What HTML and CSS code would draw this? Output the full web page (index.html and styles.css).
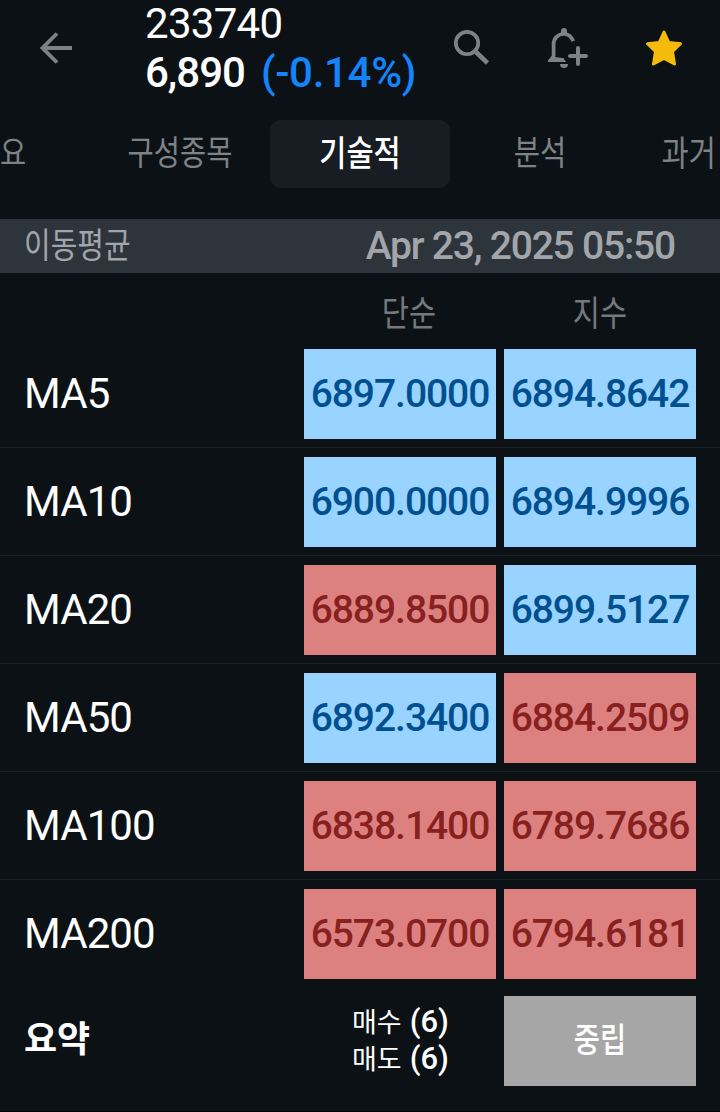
FILE: index.html
```html
<!DOCTYPE html>
<html lang="ko">
<head>
<meta charset="utf-8">
<title>233740</title>
<link rel="stylesheet" href="styles.css">
</head>
<body>
<div class="screen">
  <header class="header">
    <svg class="back" width="36" height="36" viewBox="0 0 36 36"><path d="M34 18H5M19 3.500L4.500 18L19 32.500" fill="none" stroke="#7e8185" stroke-width="3.8"/></svg>
    <div class="quote">
      <div class="symbol">233740</div>
      <div class="price"><span class="last">6,890</span><span class="change">(-0.14%)</span></div>
    </div>
    <div class="actions">
      <svg width="40" height="40" viewBox="0 0 40 40" fill="none" stroke="#7e8185"><circle cx="16" cy="16" r="11.2" stroke-width="3.8"/><path d="M25 25L36.500 36" stroke-width="4.600"/></svg>
      <svg class="bell" width="44" height="44" viewBox="0 0 44 44"><path d="M28.300 15.200C26.500 10.500 23.500 8 19 8C13 8 8.600 12.500 8.600 18V30L6 34H19" fill="none" stroke="#7e8185" stroke-width="3.7"/><path d="M16 7.500V5a3 3 0 0 1 6 0V7.500zM3 36V34.500L7 30.500L18.500 32.300L21 36zM15 38h8a4 4 0 0 1-8 0z" fill="#7e8185"/><path d="M33 22V38M25 30H41" stroke="#7e8185" stroke-width="4" stroke-linecap="round"/></svg>
      <svg width="40" height="40" viewBox="0 0 40 40"><path d="M21 5L25.800 15.500L37.500 16.700L29.500 24.500L31.500 37L21 31.500L10.500 37L12.500 24.500L4.500 16.700L16.200 15.500Z" fill="#f4bb0b" stroke="#f4bb0b" stroke-width="3" stroke-linejoin="round"/></svg>
    </div>
  </header>
  <nav class="tabs">
    <div class="tab"><span class="ko">개요</span></div>
    <div class="tab"><span class="ko">구성종목</span></div>
    <div class="tab active"><span class="ko">기술적</span></div>
    <div class="tab"><span class="ko">분석</span></div>
    <div class="tab"><span class="ko">과거 자료</span></div>
  </nav>
  <div class="section"><span class="ko">이동평균</span><span class="date">Apr 23, 2025 05:50</span></div>
  <div class="grid columns"><span></span><span class="ko">단순</span><span class="ko">지수</span></div>
  <div class="grid row"><span class="label">MA5</span><span class="cell buy">6897.0000</span><span class="cell buy">6894.8642</span></div>
  <div class="grid row"><span class="label">MA10</span><span class="cell buy">6900.0000</span><span class="cell buy">6894.9996</span></div>
  <div class="grid row"><span class="label">MA20</span><span class="cell sell">6889.8500</span><span class="cell buy">6899.5127</span></div>
  <div class="grid row"><span class="label">MA50</span><span class="cell buy">6892.3400</span><span class="cell sell">6884.2509</span></div>
  <div class="grid row"><span class="label">MA100</span><span class="cell sell">6838.1400</span><span class="cell sell">6789.7686</span></div>
  <div class="grid row last-row"><span class="label">MA200</span><span class="cell sell">6573.0700</span><span class="cell sell">6794.6181</span></div>
  <div class="grid summary">
    <span class="ko total">요약</span>
    <div class="counts">
      <div><span class="ko">매수</span><span class="num">(6)</span></div>
      <div><span class="ko">매도</span><span class="num">(6)</span></div>
    </div>
    <span class="cell neutral"><span class="ko">중립</span></span>
  </div>
</div>
</body>
</html>
```
FILE: styles.css
```css
* { box-sizing: border-box; }
body { margin: 0; background: #0c1115; }
.screen {
  width: 720px;
  height: 1112px;
  overflow: hidden;
  border-bottom: 1px solid #000;
  background: #0c1115;
  color: #fff;
  font-family: Roboto, "Noto Sans CJK KR", sans-serif;
  white-space: nowrap;
}
.ko {
  display: inline-block;
  font-family: "Noto Sans CJK KR", sans-serif;
  font-weight: 400;
  font-size: 28.500px;
  line-height: 40px;
  transform: scaleY(1.2);
}
.header { display: flex; height: 120px; }
.back { margin: 30px 0 0 38px; }
.quote { width: 300px; margin-left: 71px; }
.symbol { height: 48px; line-height: 48px; font-size: 42px; letter-spacing: -0.7px; }
.price { display: flex; gap: 16px; height: 50px; line-height: 50px; font-size: 42px; font-weight: 500; }
.last { letter-spacing: -1px; }
.change { color: #1484fb; letter-spacing: -0.3px; }
.actions { display: flex; gap: 56px; padding-top: 27px; margin-left: 6px; }
.bell { margin: -1px -2px 0 -2px; }
.tabs { display: flex; height: 68px; margin-left: -90px; }
.tab {
  flex: 0 0 180px;
  display: flex;
  justify-content: center;
  padding-top: 12px;
  border-radius: 11px;
  color: #7f8287;
}
.tab.active { background: #171d23; color: #fff; }
.active .ko { font-weight: 500; font-size: 29.5px; }
.tab:last-child .ko { font-size: 29.5px; }
.section {
  display: flex;
  justify-content: space-between;
  height: 54px;
  margin-top: 31px;
  padding: 0 45px 0 24px;
  background: #2d343b;
  color: #a2a5a9;
}
.section .ko { margin-top: 4px; font-size: 29px; }
.date { font-size: 39px; line-height: 54px; font-weight: 500; letter-spacing: -1.2px; }
.grid { display: grid; grid-template-columns: 272px 192px 192px; column-gap: 8px; padding: 0 24px; }
.columns { height: 67px; padding-top: 18px; color: #75797d; justify-items: center; }
.columns .ko { margin-left: 18px; font-size: 29.5px; }
.columns .ko:last-child { margin-left: 0; }
.row { height: 108px; padding-top: 9px; border-bottom: 1px solid #1a1f23; }
.last-row { border-bottom-color: transparent; }
.label { height: 90px; line-height: 90px; font-size: 42px; letter-spacing: -0.9px; }
.cell {
  height: 90px;
  line-height: 90px;
  font-size: 39px;
  font-weight: 500;
  letter-spacing: -1.05px;
  text-align: center;
}
.buy { background: #99d3ff; color: #00508f; }
.sell { background: #dd8180; color: #862120; }
.neutral { background: #a6a6a6; color: #fff; line-height: 82px; }
.neutral .ko { font-weight: 500; letter-spacing: 0; }
.summary { padding-top: 8px; }
.total { margin-top: 20px; font-weight: 700; font-size: 36px; transform: none; }
.counts { display: flex; flex-direction: column; padding: 7px 0 0 48px; }
.counts div { display: flex; gap: 8px; height: 37px; line-height: 37px; }
.counts .ko { font-size: 27px; line-height: 36px; transform: none; }
.num { font-size: 31px; font-weight: 500; }
```
